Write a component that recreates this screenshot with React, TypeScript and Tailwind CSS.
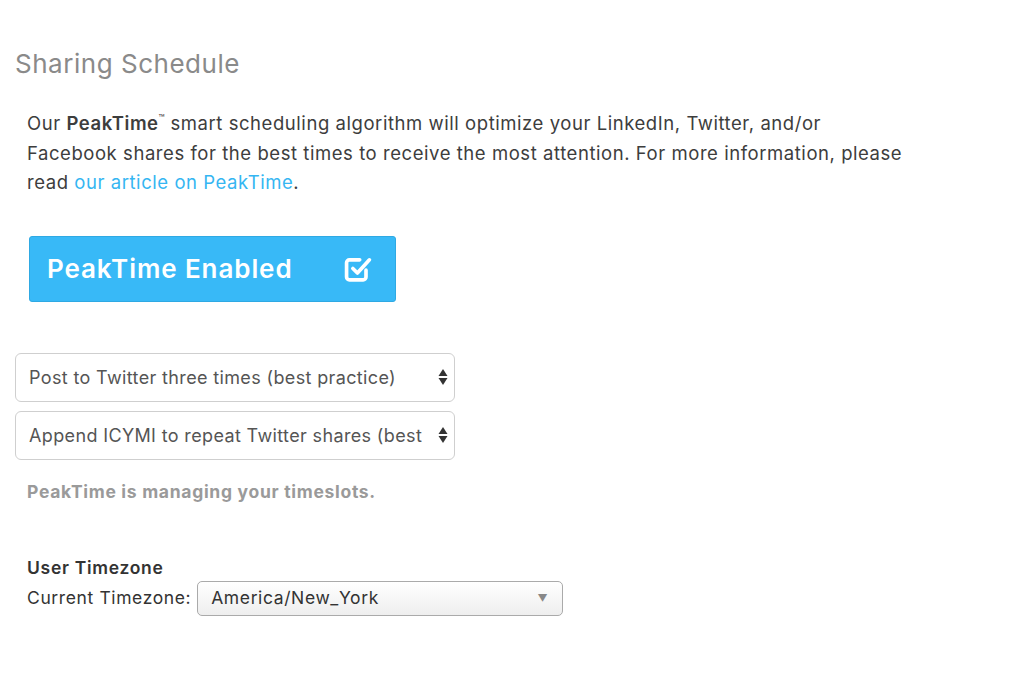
import React from "react";

function CheckBox() {
  return (
    <svg width="32" height="32" viewBox="0 0 28 28" fill="none" stroke="white" strokeWidth="3.2" strokeLinecap="round" strokeLinejoin="round">
      <path d="M21 15v6a2.5 2.5 0 0 1-2.5 2.5h-12A2.5 2.5 0 0 1 4 21V8.5A2.5 2.5 0 0 1 6.5 6h9" />
      <path d="M9.5 13.5l4 4L24 6" />
    </svg>
  );
}

function UpDown() {
  return (
    <svg width="10" height="20" viewBox="0 0 10 20" fill="#333">
      <path d="M5 2l4.5 7h-9z" />
      <path d="M5 18l4.5-7h-9z" />
    </svg>
  );
}

export default function App() {
  return (
    <div className="w-[1024px] h-[685px] bg-white overflow-hidden text-[#444]" style={{ fontFamily: "Inter, 'Open Sans', sans-serif" }}>
      <div className="pt-[46px] px-[15px]">
        <h2 className="text-[26px] leading-[36px] text-[#8a8a8a] font-normal tracking-[0.02em]">Sharing Schedule</h2>

        <p className="mt-[27px] ml-[12px] w-[900px] text-[18.5px] leading-[29.5px] tracking-[0.03em] text-[#3d3d3d]">
          Our <b className="font-semibold">PeakTime</b>
          <span className="text-[10px] align-top leading-[18px] tracking-normal">™</span> smart scheduling algorithm will optimize your LinkedIn, Twitter, and/or
          <br />
          Facebook shares for the best times to receive the most attention. For more information, please
          <br />
          read <a className="text-[#35b6f2]">our article on PeakTime</a>.
        </p>

        <button className="mt-[38px] ml-[14px] w-[367px] h-[66px] bg-[#38b9f7] border border-[#2fa9e3] rounded-[3px] flex items-center justify-between pl-[17px] pr-[21px] text-white text-[26px] tracking-[0.035em] font-semibold">
          <span>PeakTime Enabled</span>
          <CheckBox />
        </button>

        <div className="mt-[51px] flex flex-col gap-[9px] w-[440px]">
          <div className="h-[49px] border border-[#cfcfcf] rounded-[6px] flex items-center justify-between pl-[13px] pr-[6px] text-[18px] tracking-[0.02em] text-[#555]">
            <span className="whitespace-nowrap overflow-hidden">Post to Twitter three times (best practice)</span>
            <UpDown />
          </div>
          <div className="h-[49px] border border-[#cfcfcf] rounded-[6px] flex items-center justify-between pl-[13px] pr-[6px] text-[18px] tracking-[0.02em] text-[#555]">
            <span className="whitespace-nowrap overflow-hidden">Append ICYMI to repeat Twitter shares (best</span>
            <UpDown />
          </div>
        </div>

        <p className="mt-[19px] ml-[12px] text-[17.5px] font-bold tracking-[0.04em] text-[#9a9a9a]">PeakTime is managing your timeslots.</p>

        <div className="mt-[50px] ml-[12px]">
          <div className="text-[17.5px] font-semibold tracking-[0.04em] text-[#333] leading-[26px]">User Timezone</div>
          <div className="flex items-center gap-[6px] text-[17.5px] tracking-[0.035em] text-[#333]">
            <span>Current Timezone:</span>
            <div className="w-[366px] h-[35px] border border-[#aaa] rounded-[5px] bg-gradient-to-b from-white to-[#eeeeee] flex items-center justify-between pl-[13px] pr-[14px] text-[#333]">
              <span>America/New_York</span>
              <span className="text-[10px] text-[#888]">▼</span>
            </div>
          </div>
        </div>
      </div>
    </div>
  );
}
